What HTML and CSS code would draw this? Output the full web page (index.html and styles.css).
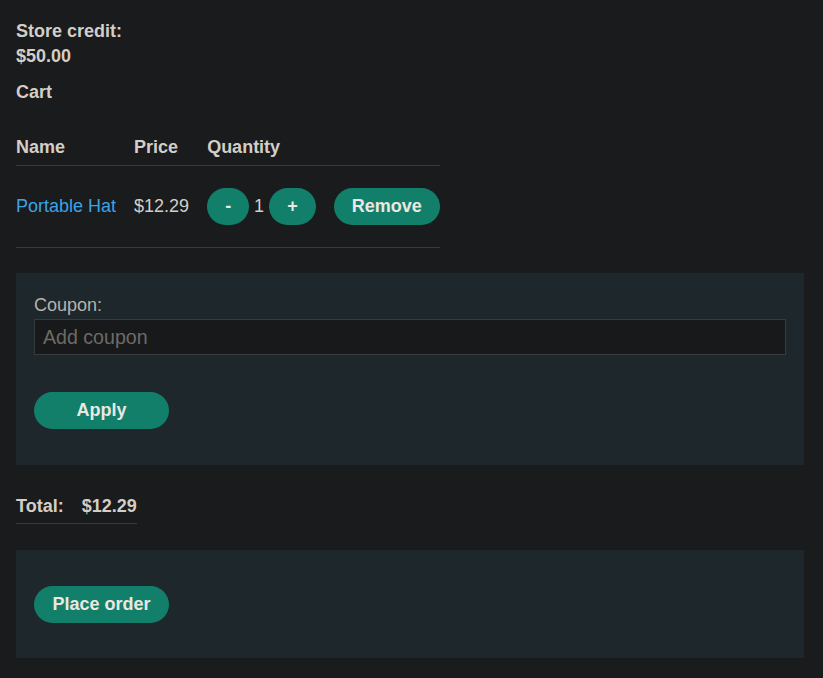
FILE: index.html
```html
<!DOCTYPE html>
<html>
<head>
<meta charset="utf-8">
<link rel="stylesheet" href="styles.css">
</head>
<body>
<div class="page">
  <p class="credit">Store credit:<br>$50.00</p>
  <p class="cart-title">Cart</p>
  <table class="cart">
    <thead>
      <tr><th>Name</th><th>Price</th><th>Quantity</th><th></th></tr>
    </thead>
    <tbody>
      <tr>
        <td><a class="link" href="#">Portable Hat</a></td>
        <td>$12.29</td>
        <td class="qty"><button class="btn">-</button><span class="count">1</span><button class="btn">+</button></td>
        <td><button class="btn">Remove</button></td>
      </tr>
    </tbody>
  </table>
  <form class="panel coupon">
    <label class="label" for="coupon">Coupon:</label>
    <input id="coupon" class="input" type="text" placeholder="Add coupon">
    <button class="btn wide" type="button">Apply</button>
  </form>
  <table class="total">
    <tr><th>Total:</th><th>$12.29</th></tr>
  </table>
  <form class="panel order">
    <button class="btn wide" type="button">Place order</button>
  </form>
</div>
</body>
</html>
```
FILE: styles.css
```css
html, body {
  margin: 0;
  padding: 0;
  background: #1a1b1d;
}
body {
  font-family: "Liberation Sans", Arial, sans-serif;
  font-size: 18px;
  color: #d3cec6;
}
.page {
  padding: 0 16px;
  width: 788px;
}
.credit {
  margin: 0;
  padding-top: 19px;
  font-weight: bold;
  line-height: 25px;
}
.cart-title {
  margin: 13px 0 0;
  font-weight: bold;
  line-height: 21px;
}
table {
  border-collapse: collapse;
}
.cart {
  margin-top: 34px;
}
.cart th {
  text-align: left;
  font-weight: bold;
  line-height: 21px;
  padding: 0 0 7px 0;
  border-bottom: 1px solid #3a3b3e;
}
.cart td {
  padding: 22px 0 22px 0;
  line-height: 21px;
  border-bottom: 1px solid #3a3b3e;
  white-space: nowrap;
}
.cart th + th,
.cart td + td {
  padding-left: 18px;
}
.link {
  color: #3ba4e4;
  text-decoration: none;
}
.btn {
  font-family: "Liberation Sans", Arial, sans-serif;
  font-size: 18px;
  font-weight: bold;
  line-height: 21px;
  padding: 8px 18px;
  border: 0;
  border-radius: 20px;
  background: #127f6a;
  color: #ebe7e1;
  vertical-align: middle;
}
.count {
  display: inline-block;
  width: 20px;
  text-align: center;
  vertical-align: middle;
}
.panel {
  background: #1d272c;
  display: flex;
  flex-direction: column;
  align-items: flex-start;
}
.coupon {
  margin-top: 25px;
  padding: 23px 18px 36px;
}
.label {
  color: #b8b3ab;
  line-height: 18px;
  margin-bottom: 5px;
}
.input {
  box-sizing: border-box;
  width: 752px;
  height: 36px;
  background: #18191b;
  border: 1px solid #363b3d;
  color: #d3cec6;
  font-family: "Liberation Sans", Arial, sans-serif;
  font-size: 19.6px;
  padding: 0 8px;
  margin-bottom: 37px;
}
.input::placeholder {
  color: #6c6b67;
}
.wide {
  min-width: 135px;
}
.total {
  margin-top: 31px;
}
.total th {
  text-align: left;
  font-weight: bold;
  line-height: 21px;
  padding: 0 0 6px 0;
  border-bottom: 1px solid #3a3b3e;
}
.total th + th {
  padding-left: 18px;
}
.order {
  margin-top: 26px;
  padding: 36px 18px 35px;
}
```
